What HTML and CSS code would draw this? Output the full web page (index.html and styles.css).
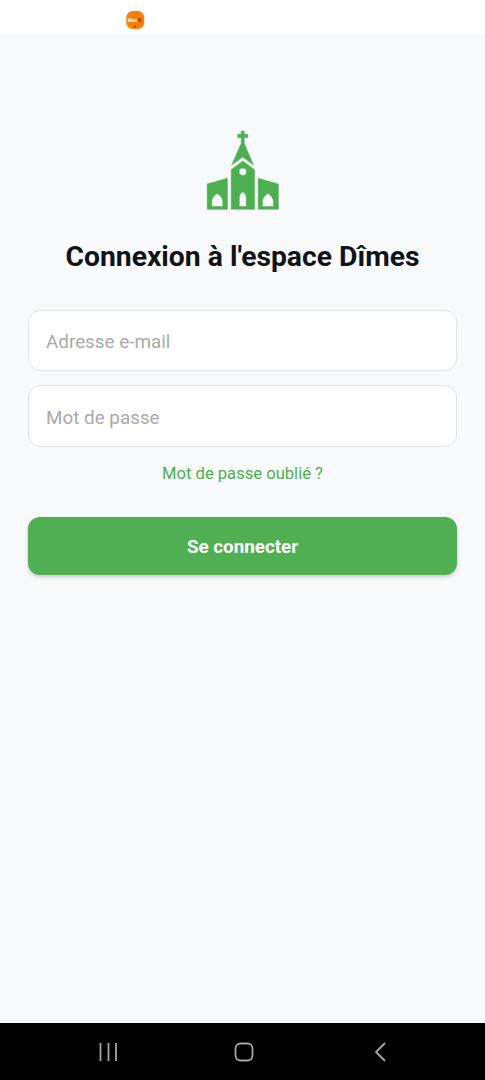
FILE: index.html
```html
<!DOCTYPE html>
<html lang="fr">
<head>
<meta charset="utf-8">
<title>Connexion à l'espace Dîmes</title>
<link rel="stylesheet" href="styles.css">
</head>
<body>
<div class="screen">
  <header class="status-bar">
    <svg class="status-icon" viewBox="0 0 18 18">
      <rect x=".3" width="18" height="18" rx="6.5" fill="#fb7c06"/>
      <text class="status-label" x="1.8" y="10.6" fill="#fff">Max</text>
      <text class="status-label" x="12" y="10.6" fill="#4a2500">it</text>
      <circle cx="9" cy="15.5" r=".9" fill="#7a3c00"/>
    </svg>
  </header>
  <main class="content">
    <svg class="church" viewBox="205 129 76 82" fill="#4caf50" stroke="#4caf50" stroke-width=".5" stroke-linejoin="round">
      <path d="M241.2 131h3v3.3h3.6v3.2h-3.6v6l9.3 21.5-10.8-8-11 8 9.5-21.5v-6h-3.6v-3.2h3.6z"/>
      <path fill-rule="evenodd" d="M242.8 161l11.7 8.8v39.5h-23.3v-39.5zM242.8 168.1a3.7 3.7 0 1 0 0 7.4 3.7 3.7 0 0 0 0-7.4zM239.3 206.5h6.9v-8.6q0-4-3.4-6.1-3.5 2.1-3.5 6.1z"/>
      <path fill-rule="evenodd" d="M227.4 178.2v31.1h-20.2v-25.2zM211.8 206.5h11v-4.6c0-4-2.3-6.5-5.5-8.4-3.2 1.9-5.5 4.4-5.5 8.4z"/>
      <path fill-rule="evenodd" d="M258.2 178.2l20.2 5.9v25.2h-20.2zM262.4 206.5h11v-4.6c0-4-2.3-6.5-5.5-8.4-3.2 1.9-5.5 4.4-5.5 8.4z"/>
    </svg>
    <h1 class="title">Connexion à l'espace Dîmes</h1>
    <form class="form">
      <input class="field" type="email" placeholder="Adresse e-mail">
      <input class="field field-password" type="password" placeholder="Mot de passe">
      <a class="forgot">Mot de passe oublié ?</a>
      <button class="submit" type="button">Se connecter</button>
    </form>
  </main>
  <nav class="nav-bar">
    <svg class="nav-icon" viewBox="0 0 20 20"><path d="M1.5 1v18M9.5 1v18M17 1v18"/></svg>
    <svg class="nav-icon" viewBox="0 0 20 20"><rect x="1.5" y="1.5" width="17" height="17" rx="5"/></svg>
    <svg class="nav-icon" viewBox="0 0 20 20"><path d="M15 1L6 10l9 9"/></svg>
  </nav>
</div>
</body>
</html>
```
FILE: styles.css
```css
* { box-sizing: border-box; }
body { margin: 0; font-family: Roboto, "Liberation Sans", sans-serif; }
.screen { height: 1080px; display: flex; flex-direction: column; background: #f9fafc; overflow: hidden; }
.status-bar { height: 34px; background: #fff; padding: 11px 0 0 126px; }
.status-icon { display: block; width: 18px; height: 18px; overflow: visible; }
.status-label { font-size: 5px; font-weight: 700; }
.content { flex: 1; display: flex; flex-direction: column; align-items: center; padding: 95px 28px 0; }
.church { width: 76px; height: 82px; flex: none; }
.title { margin: 29px 0 0; font-size: 28.3px; line-height: 34px; font-weight: 700; color: #111417; white-space: nowrap; }
.form { width: 429px; margin-top: 36px; display: flex; flex-direction: column; }
.field { width: 100%; height: 61px; margin-bottom: 14px; padding: 3px 17px 0; border: 1px solid #e1e3e5; border-radius: 12px; background: #fff; font: 400 18.85px Roboto, sans-serif; color: #111417; outline: 0; }
.field-password { height: 62px; padding-top: 3px; }
.field::placeholder { color: #aaa; opacity: 1; }
.forgot { align-self: center; margin-top: 3px; font-size: 16.6px; line-height: 20px; color: #4caf50; }
.submit { height: 58px; margin-top: 33px; padding: 2px 0 0; border: 0; border-radius: 12px; background: #4faf52; color: #fff; font: 700 18.8px Roboto, sans-serif; box-shadow: 0 2px 4px rgba(0, 0, 0, .2); }
.nav-bar { height: 57px; background: #000; display: flex; justify-content: center; gap: 116px; padding-top: 19px; padding-left: 3px; }
.nav-icon { width: 20px; height: 20px; fill: none; stroke: #a6a6a6; stroke-width: 1.8; }
.nav-icon:first-child { margin: 0 -1px 0 1px; }
```
